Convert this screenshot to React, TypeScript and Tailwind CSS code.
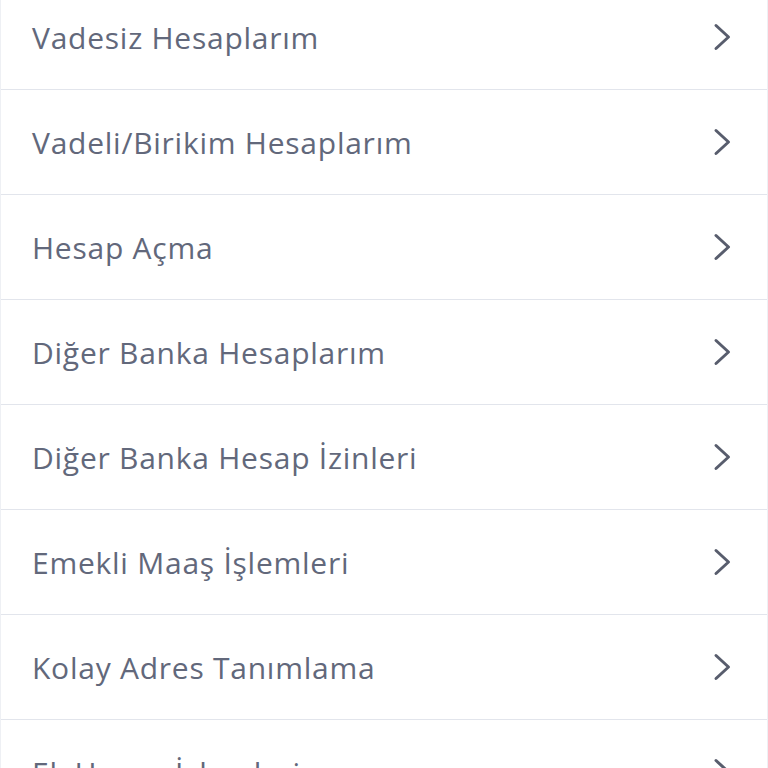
import React from 'react';

const items = [
  'Vadesiz Hesaplarım',
  'Vadeli/Birikim Hesaplarım',
  'Hesap Açma',
  'Diğer Banka Hesaplarım',
  'Diğer Banka Hesap İzinleri',
  'Emekli Maaş İşlemleri',
  'Kolay Adres Tanımlama',
  'Ek Hesap İşlemleri',
];

const Chevron: React.FC = () => (
  <svg width="18" height="28" viewBox="0 0 18 28" fill="none" className="shrink-0">
    <polyline
      points="3,2.5 15.5,14 3,25.5"
      stroke="#585d6d"
      strokeWidth="3"
      strokeLinecap="round"
      strokeLinejoin="round"
    />
  </svg>
);

const App: React.FC = () => {
  return (
    <div className="h-[768px] w-[768px] overflow-hidden bg-white">
      <ul className="-mt-[15px] border-x border-[#eef0f4]">
        {items.map((label) => (
          <li
            key={label}
            className="flex h-[105px] items-center justify-between border-b border-[#e2e5ec] pl-[31px] pr-[36px]"
          >
            <span
              className="text-[30px] font-normal tracking-[0.025em] text-[#62687b]"
              style={{ fontFamily: '"Open Sans", Lato, sans-serif' }}
            >
              {label}
            </span>
            <Chevron />
          </li>
        ))}
      </ul>
    </div>
  );
};

export default App;
